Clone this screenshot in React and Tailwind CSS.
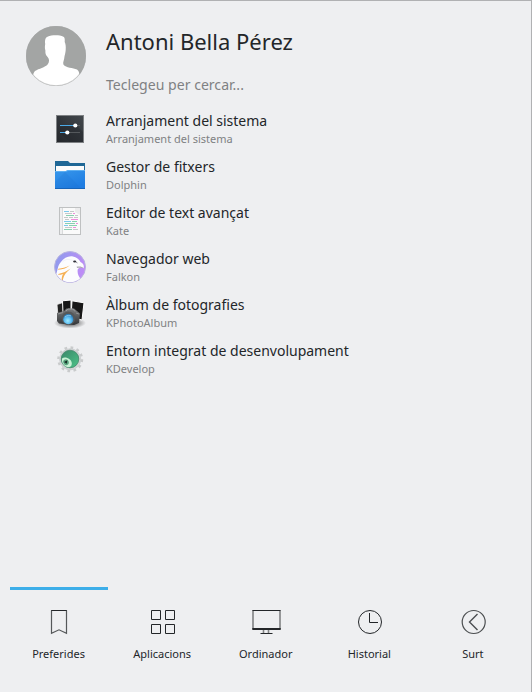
import React from "react";

function Avatar() {
  return (
    <svg className="h-[60px] w-[60px] shrink-0" viewBox="0 0 60 60">
      <defs>
        <clipPath id="avatar"><circle cx="30" cy="30" r="30" /></clipPath>
      </defs>
      <circle cx="30" cy="30" r="30" fill="#a3a5a4" />
      <path clipPath="url(#avatar)" fill="#fff" d="M22 10.6C25 8.8 34 8.6 37 10.6C38.9 11.5 38.9 13.5 38.7 16C39.6 18 40 20 39.7 24C39.5 27 38.7 29 38.4 31C38.4 34 36.6 36 37.4 38.5C40 42 47 41.8 51 43.5C53.3 45 54 48 54 60H6C6 52 6.8 47.5 9 45C13 42.4 19 41.5 21.8 38.2C23.4 36 23.6 33 21.6 31C19.6 29 19.2 27 19.4 24.5C18.6 22 18.9 20 19.2 18C18.8 14.5 19.2 11.6 22 10.6Z" />
      <circle cx="30" cy="30" r="29.7" fill="none" stroke="#a3a5a4" strokeWidth=".6" />
    </svg>
  );
}

function SettingsIcon() {
  return (
    <svg className="h-8 w-8" viewBox="0 0 32 32">
      <defs>
        <linearGradient id="set" x1="0" y1="1" x2="1" y2="0">
          <stop stopColor="#24272c" /><stop offset="1" stopColor="#42474c" />
        </linearGradient>
      </defs>
      <rect x="2" y="2" width="28" height="28" fill="#7e8184" />
      <rect x="3" y="3" width="26" height="26" fill="url(#set)" />
      <path d="M6 14L21 11L29 19V29H16L6 20Z" fill="#202327" opacity=".35" />
      <path d="M6 12.5H26M6 19.5H26" stroke="#54585c" />
      <path d="M6 12.5H21M6 19.5H13" stroke="#4ba9e6" />
      <circle cx="21.3" cy="12.5" r="2.1" fill="#fff" />
      <circle cx="13.3" cy="19.5" r="2.1" fill="#fff" />
    </svg>
  );
}

function FolderIcon() {
  return (
    <svg className="h-8 w-8" viewBox="0 0 32 32">
      <defs>
        <linearGradient id="fold" x1="0" y1="0" x2=".5" y2="1">
          <stop stopColor="#3c9ced" /><stop offset="1" stopColor="#1f7de2" />
        </linearGradient>
      </defs>
      <path d="M1 2H14L16 4H31V18H1Z" fill="#1f6796" />
      <path d="M1 12H2V7H30V11H31V30H1Z" fill="url(#fold)" />
      <path d="M2 7H30V11H14L12 12H2Z" fill="#fbfbfb" />
      <path d="M1 12.5H11.5L14 11.5H31" fill="none" stroke="#69b6f3" strokeWidth=".8" />
      <path d="M1 23L11 13L27 29H1Z" fill="#1767c8" opacity=".16" />
      <path d="M1 29.5H31" stroke="#1764b9" />
    </svg>
  );
}

function KateIcon() {
  return (
    <svg className="h-8 w-8" viewBox="0 0 32 32">
      <rect x="5" y="2" width="22" height="28" fill="#bfc1c2" />
      <rect x="6" y="3" width="20" height="26" fill="#fafafa" />
      <rect x="6" y="3" width="2" height="26" fill="#eeeff0" />
      <path d="M8.5 3V29" stroke="#d8dadb" />
      <path d="M21 3H26V10L21 7Z" fill="#ececed" />
      <g strokeWidth="1">
        <path d="M10 6.5H15M10 16.5H17M10 20.5H14" stroke="#7bc9ec" />
        <path d="M12 10.5H20M18 16.5H23M11 18.5H21M15 20.5H23M10 24.5H18" stroke="#87d0b1" />
        <path d="M19 8.5H21M17 14.5H24M22 18.5H24M19 22.5H22" stroke="#f08bdc" />
        <path d="M16 6.5H20M11 8.5H18M21 10.5H24M10 12.5H14M15 12.5H19M20 12.5H24M11 14.5H15M11 22.5H18M19 24.5H24" stroke="#c5c8ca" />
      </g>
    </svg>
  );
}

function FalkonIcon() {
  return (
    <svg className="h-8 w-8" viewBox="0 0 32 32">
      <defs>
        <linearGradient id="fal" x1="0" y1=".3" x2="1" y2=".6">
          <stop stopColor="#8f9bed" /><stop offset="1" stopColor="#c18bf7" />
        </linearGradient>
        <clipPath id="falc"><circle cx="16" cy="16" r="15.3" /></clipPath>
      </defs>
      <circle cx="16" cy="16" r="15.5" fill="url(#fal)" stroke="#b9b4df" />
      <g clipPath="url(#falc)">
        <path d="M1 25C4.5 20 2.5 16.5 6.5 11.5C10 6.5 14.5 4.6 19 5.4C22.5 6 25 8 26.5 11C29.5 12.5 30.3 14.5 29.6 17.2C27 16.2 24.2 16.8 23.8 18.3C23 22 24.5 26 27 28C23 33 9 33 2 30Z" fill="#fcfcfe" />
        <path d="M8.5 11C12 7 16 8.5 19 9.5" fill="none" stroke="#ebecf6" strokeWidth=".7" />
        <path d="M4.4 17.7C9 17.3 13 15.8 16 14.2C13 17 9 18.4 4 18.7Z" fill="#f5aa48" />
        <path d="M4.3 23C9 22.2 13 20.2 16.5 17.6C12.5 21.5 9.6 23.8 8.8 30L7.6 29.8C7.6 26 8.2 24.2 9.3 22.9C7.5 23.5 6 23.7 4.2 23.8Z" fill="#f5b055" />
      </g>
      <path d="M22.5 15.8C25.5 15 28.2 15.6 29.6 17.2C27.5 16.7 25 16.5 23.2 17Z" fill="#aaa6b2" />
      <ellipse cx="20.7" cy="10.6" rx="1.6" ry="1" fill="#303039" />
      <path d="M22 11.2L23.5 12" stroke="#77747e" strokeWidth=".7" />
    </svg>
  );
}

function PhotoIcon() {
  return (
    <svg className="h-8 w-8" viewBox="0 0 32 32">
      <defs>
        <radialGradient id="lens" cx=".45" cy=".65" r=".6">
          <stop stopColor="#a0ecff" /><stop offset=".6" stopColor="#58b9ef" /><stop offset="1" stopColor="#2d7db8" />
        </radialGradient>
        <radialGradient id="shade">
          <stop stopColor="#333" stopOpacity=".9" /><stop offset="1" stopColor="#333" stopOpacity="0" />
        </radialGradient>
        <linearGradient id="cam" x1="0" y1="0" x2="0" y2="1">
          <stop stopColor="#7c7e80" /><stop offset="1" stopColor="#333537" />
        </linearGradient>
      </defs>
      <ellipse cx="16" cy="26" rx="16" ry="5.5" fill="url(#shade)" />
      <path d="M3 7.5L9 5.5L12 18L4 19Z" fill="#222" stroke="#eee" strokeWidth=".8" />
      <path d="M8.5 3.8L17 3V17H9Z" fill="#161616" stroke="#fff" />
      <path d="M18 3.8L30 5.8L28 23L17 20Z" fill="#181818" stroke="#fff" />
      <path d="M3 16L10 14L12.5 11.5H20L23 14L26 16.5L25 26L20 28L5 26.5L3 24Z" fill="url(#cam)" />
      <path d="M12 14L14 12H19L21 14.5" fill="none" stroke="#a3a5a6" strokeWidth=".8" />
      <path d="M4 17L9 15.5M22 16L25 17" stroke="#919394" />
      <circle cx="14.5" cy="21.2" r="6.8" fill="#55585a" />
      <circle cx="14.3" cy="22.2" r="5.1" fill="url(#lens)" />
      <path d="M11 20C13 18 16 18 17 19" fill="none" stroke="#a9dcf5" strokeWidth=".7" />
    </svg>
  );
}

function DevelopIcon() {
  return (
    <svg className="h-8 w-8" viewBox="0 0 32 32">
      <defs>
        <linearGradient id="dev" x1="0" y1="0" x2="1" y2="1">
          <stop stopColor="#3a8668" /><stop offset="1" stopColor="#4cc489" />
        </linearGradient>
      </defs>
      <circle cx="16.2" cy="16.3" r="11.8" fill="none" stroke="#c9cbcc" strokeWidth="2.4" strokeDasharray="2.7 3.48" />
      <circle cx="16.2" cy="16.3" r="10.6" fill="#d3d5d6" stroke="#c3c6c7" strokeWidth=".6" />
      <circle cx="16" cy="16" r="8.8" fill="url(#dev)" stroke="#3d8164" strokeWidth=".7" />
      <path d="M8 15.5C11 13 17.8 16 17.8 20.5C17.8 23 16.5 24.2 14 24.2C10 23.5 7.5 20 8 15.5Z" fill="#c8f1d5" />
      <ellipse cx="12" cy="19.2" rx="2.7" ry="3" fill="#58a47e" transform="rotate(-25 12 19.2)" />
      <path d="M10 19L13.3 17.3L12.8 20.7Z" fill="#142d24" />
    </svg>
  );
}

const apps = [
  ["Arranjament del sistema", "Arranjament del sistema", SettingsIcon],
  ["Gestor de fitxers", "Dolphin", FolderIcon],
  ["Editor de text avançat", "Kate", KateIcon],
  ["Navegador web", "Falkon", FalkonIcon],
  ["Àlbum de fotografies", "KPhotoAlbum", PhotoIcon],
  ["Entorn integrat de desenvolupament", "KDevelop", DevelopIcon],
];

const tabs = [
  ["Preferides", <><path d="M8 4.5H24" /><path d="M8.5 4.5V27.3L16 23.8L23.5 27.3V4.5" stroke="#55585a" strokeWidth="1.2" /></>],
  ["Aplicacions", <path d="M4.5 4.5H13.5V13.5H4.5ZM18.5 4.5H27.5V13.5H18.5ZM4.5 18.5H13.5V27.5H4.5ZM18.5 18.5H27.5V27.5H18.5Z" />],
  ["Ordinador", <><path d="M3 23V5M30 23V5M13.5 24V27M18.5 24V27" stroke="#808284" strokeWidth="1.6" /><path d="M2.3 4.5H30.7M10.5 27.5H22.5" /><path d="M2.3 23H30.7" strokeWidth="2" /></>],
  ["Historial", <><circle cx="16" cy="16" r="11.5" /><path d="M15.5 7V16.5H24" /></>],
  ["Surt", <g stroke="#4b4e50" strokeWidth="1.2"><circle cx="15.7" cy="16" r="11.5" /><path d="M19.5 8L11.5 16L19.5 24" strokeWidth="1.4" /></g>],
];

export default function App() {
  return (
    <div className="flex h-[692px] w-[532px] flex-col border-t border-r border-[#b0b1b3] bg-[#eeeff1] font-['Noto_Sans',sans-serif] text-[#232629]">
      <header className="flex h-[105px] pt-[25px] pl-[26px]">
        <Avatar />
        <div className="ml-5">
          <h1 className="h-[30px] text-[22px] leading-[30px] whitespace-nowrap">Antoni Bella Pérez</h1>
          <p className="mt-[19px] text-[14.08px] leading-5 text-[#7f8183]">Teclegeu per cercar...</p>
        </div>
      </header>
      <main className="flex-1">
        {apps.map(([name, detail, Icon]) => (
          <div key={detail} className="flex h-[46px] items-center pl-[54px]">
            <Icon />
            <div className="ml-5 whitespace-nowrap">
              <div className="text-[14px] leading-5">{name}</div>
              <div className="text-[11px] leading-4 text-[#7f8183]">{detail}</div>
            </div>
          </div>
        ))}
      </main>
      <nav className="h-[105px] pl-[7.5px]">
        <div className="ml-[2.5px] h-[3px] w-[98px] bg-[#3daee9]" />
        <div className="flex pt-4">
          {tabs.map(([label, art]) => (
            <div key={label} className="flex w-[103.6px] flex-col items-center">
              <svg className="h-8 w-8" viewBox="0 0 32 32" fill="none" stroke="#232629">{art}</svg>
              <span className="mt-2 pr-[1.5px] text-[11px] leading-4">{label}</span>
            </div>
          ))}
        </div>
      </nav>
    </div>
  );
}
